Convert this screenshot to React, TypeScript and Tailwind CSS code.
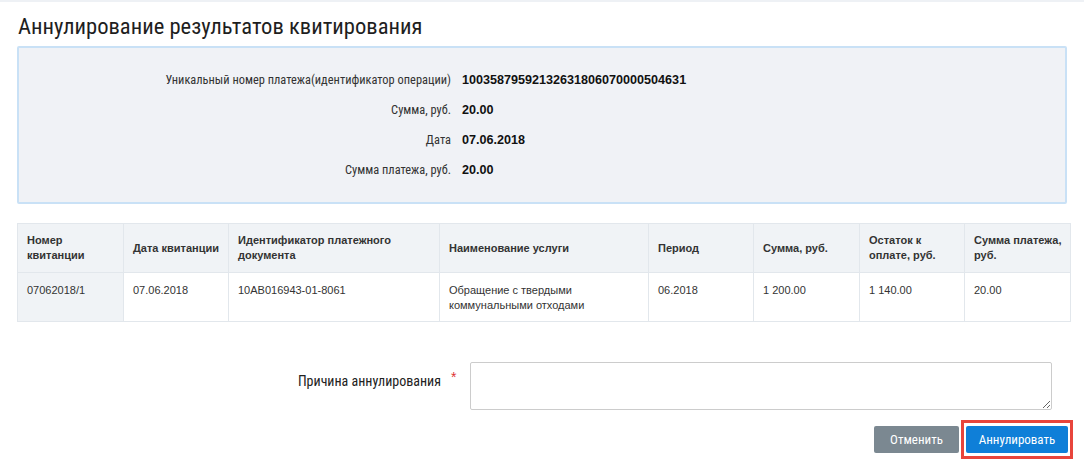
import React from 'react'

const narrow = { fontFamily: '"Roboto Condensed", "Liberation Sans Narrow", "DejaVu Sans Condensed", Roboto, sans-serif' }

const info = [
  { label: 'Уникальный номер платежа(идентификатор операции)', value: '10035879592132631806070000504631' },
  { label: 'Сумма, руб.', value: '20.00' },
  { label: 'Дата', value: '07.06.2018' },
  { label: 'Сумма платежа, руб.', value: '20.00' },
]

const columns = [
  { title: 'Номер квитанции', w: 'w-[106px]' },
  { title: 'Дата квитанции', w: 'w-[105px]' },
  { title: 'Идентификатор платежного документа', w: 'w-[211px]' },
  { title: 'Наименование услуги', w: 'w-[209px]' },
  { title: 'Период', w: 'w-[105px]' },
  { title: 'Сумма, руб.', w: 'w-[106px]' },
  { title: 'Остаток к оплате, руб.', w: 'w-[105px]' },
  { title: 'Сумма платежа, руб.', w: 'w-[106px]' },
]

const row = [
  '07062018/1',
  '07.06.2018',
  '10AB016943-01-8061',
  'Обращение с твердыми коммунальными отходами',
  '06.2018',
  '1 200.00',
  '1 140.00',
  '20.00',
]

export default function App() {
  return (
    <div className="w-[1084px] h-[467px] bg-white border-t-2 border-[#eef1f5] text-[#333]" style={{ fontFamily: '"Liberation Sans", Arial, sans-serif' }}>
      <div className="px-[17px]">
        <h1 className="pt-[11px] pl-px text-[22.6px] leading-[28px] text-[#1e1e1e]" style={narrow}>
          Аннулирование результатов квитирования
        </h1>

        <div className="mt-[5px] h-[158px] border-2 border-[#c9e1f6] rounded-[2px] bg-[#f0f2f6] pt-[17px]">
          {info.map((item) => (
            <div key={item.label} className="flex items-center h-[30px]">
              <div className="w-[432px] text-right text-[12.4px] text-[#333]" style={narrow}>{item.label}</div>
              <div className="pl-[11px] text-[12.6px] font-bold text-[#111]">{item.value}</div>
            </div>
          ))}
        </div>

        <table className="mt-[19px] border-collapse table-fixed w-[1053px] text-[11px]">
          <thead>
            <tr className="h-[49px] bg-[#f0f3f6]">
              {columns.map((c) => (
                <th key={c.title} className={`${c.w} border border-[#e2e7ec] pl-[9px] pr-[4px] text-left align-middle font-bold leading-[15px] text-[#333]`}>
                  {c.title}
                </th>
              ))}
            </tr>
          </thead>
          <tbody>
            <tr className="h-[49px]">
              {row.map((v, i) => (
                <td key={i} className={`border border-[#e2e7ec] pl-[9px] pr-[4px] pt-[10px] align-top leading-[15px] text-[#333] ${i === 0 ? 'bg-[#f0f3f6]' : 'bg-white'}`}>
                  {v}
                </td>
              ))}
            </tr>
          </tbody>
        </table>

        <div className="mt-[40px] flex items-start">
          <label className="w-[424px] pt-[9px] text-right text-[14px] text-[#222]" style={narrow}>
            Причина аннулирования
          </label>
          <span className="ml-[10px] text-[#d33] text-[14px] leading-[14px] pt-[8px]">*</span>
          <textarea className="ml-[14px] w-[582px] h-[48px] border border-[#ccc] rounded-[2px] bg-white outline-none" />
        </div>

        <div className="mt-[10px] flex justify-end -mr-[6px] gap-[2px]">
          <button className="mt-[6px] h-[27px] w-[85px] bg-[#7b8891] text-white text-[13px] rounded-[2px]" style={narrow}>
            Отменить
          </button>
          <div className="border-[3px] border-[#e8453c] px-[2px] py-[3px]">
            <button className="block h-[27px] w-[102px] bg-[#0f7fd8] text-white text-[13px] rounded-[2px]" style={narrow}>
              Аннулировать
            </button>
          </div>
        </div>
      </div>
    </div>
  )
}
